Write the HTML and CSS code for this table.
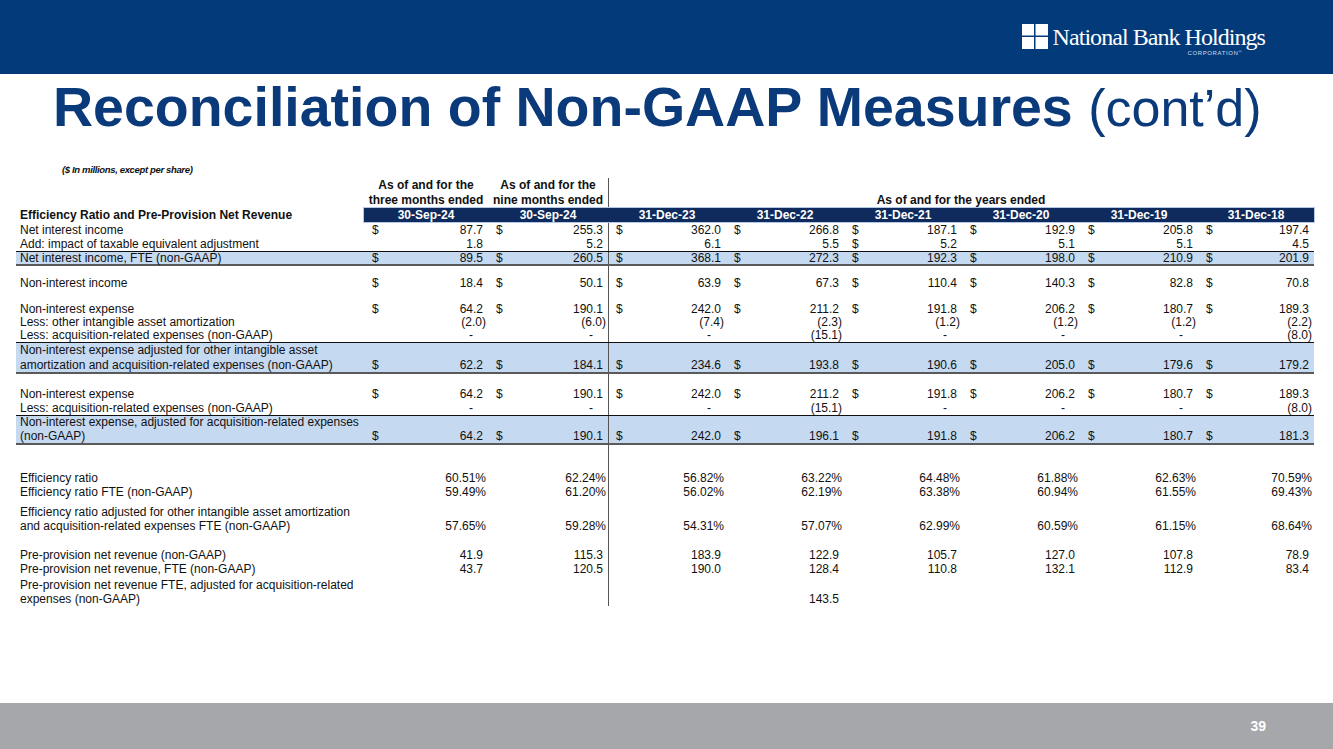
FILE: index.html
```html
<!DOCTYPE html>
<html lang="en">
<head>
<meta charset="utf-8">
<title>Reconciliation of Non-GAAP Measures (cont'd)</title>
<link rel="stylesheet" href="styles.css">
</head>
<body>
<header class="topbar">
  <div class="brand">
    <svg class="mark" width="26" height="25" viewBox="0 0 26 25" aria-hidden="true">
      <rect x="0" y="0" width="12" height="11.5" fill="#fff"/>
      <rect x="13.5" y="0" width="12.5" height="11.5" fill="#fff"/>
      <rect x="0" y="13" width="12" height="12" fill="#fff"/>
      <rect x="13.5" y="13" width="12.5" height="12" fill="#fff"/>
    </svg>
    <div class="brand-text">
      <div class="brand-name">National Bank Holdings</div>
      <div class="brand-corp">CORPORATION<sup>®</sup></div>
    </div>
  </div>
</header>

<h1 class="title">Reconciliation of Non-GAAP Measures <span class="cont">(cont’d)</span></h1>

<div class="note">($ In millions, except per share)</div>

<div class="tbl">
  <div class="row h1">
    <div></div>
    <div class="hc">As of and for the</div>
    <div class="hc">As of and for the</div>
  </div>
  <div class="row h2">
    <div></div>
    <div class="hc">three months ended</div>
    <div class="hc">nine months ended</div>
    <div class="hc span6">As of and for the years ended</div>
  </div>
  <div class="row band">
    <div class="lbl b">Efficiency Ratio and Pre-Provision Net Revenue</div>
    <div class="d first">30-Sep-24</div>
    <div class="d">30-Sep-24</div>
    <div class="d">31-Dec-23</div>
    <div class="d">31-Dec-22</div>
    <div class="d">31-Dec-21</div>
    <div class="d">31-Dec-20</div>
    <div class="d">31-Dec-19</div>
    <div class="d last">31-Dec-18</div>
  </div>

  <div class="row">
    <div class="lbl">Net interest income</div>
    <div class="c"><span>$</span><span class="v">87.7</span></div>
    <div class="c"><span>$</span><span class="v">255.3</span></div>
    <div class="c"><span>$</span><span class="v">362.0</span></div>
    <div class="c"><span>$</span><span class="v">266.8</span></div>
    <div class="c"><span>$</span><span class="v">187.1</span></div>
    <div class="c"><span>$</span><span class="v">192.9</span></div>
    <div class="c"><span>$</span><span class="v">205.8</span></div>
    <div class="c"><span>$</span><span class="v">197.4</span></div>
  </div>
  <div class="row">
    <div class="lbl">Add: impact of taxable equivalent adjustment</div>
    <div class="c"><span class="v">1.8</span></div>
    <div class="c"><span class="v">5.2</span></div>
    <div class="c"><span class="v">6.1</span></div>
    <div class="c"><span class="v">5.5</span></div>
    <div class="c"><span>$</span><span class="v">5.2</span></div>
    <div class="c"><span class="v">5.1</span></div>
    <div class="c"><span class="v">5.1</span></div>
    <div class="c"><span class="v">4.5</span></div>
  </div>
  <div class="row hl hl1">
    <div class="lbl">Net interest income, FTE (non-GAAP)</div>
    <div class="c"><span>$</span><span class="v">89.5</span></div>
    <div class="c"><span>$</span><span class="v">260.5</span></div>
    <div class="c"><span>$</span><span class="v">368.1</span></div>
    <div class="c"><span>$</span><span class="v">272.3</span></div>
    <div class="c"><span>$</span><span class="v">192.3</span></div>
    <div class="c"><span>$</span><span class="v">198.0</span></div>
    <div class="c"><span>$</span><span class="v">210.9</span></div>
    <div class="c"><span>$</span><span class="v">201.9</span></div>
  </div>
  <div class="sp s10"></div>
  <div class="row">
    <div class="lbl">Non-interest income</div>
    <div class="c"><span>$</span><span class="v">18.4</span></div>
    <div class="c"><span>$</span><span class="v">50.1</span></div>
    <div class="c"><span>$</span><span class="v">63.9</span></div>
    <div class="c"><span>$</span><span class="v">67.3</span></div>
    <div class="c"><span>$</span><span class="v">110.4</span></div>
    <div class="c"><span>$</span><span class="v">140.3</span></div>
    <div class="c"><span>$</span><span class="v">82.8</span></div>
    <div class="c"><span>$</span><span class="v">70.8</span></div>
  </div>
  <div class="sp s12"></div>
  <div class="row">
    <div class="lbl">Non-interest expense</div>
    <div class="c"><span>$</span><span class="v">64.2</span></div>
    <div class="c"><span>$</span><span class="v">190.1</span></div>
    <div class="c"><span>$</span><span class="v">242.0</span></div>
    <div class="c"><span>$</span><span class="v">211.2</span></div>
    <div class="c"><span>$</span><span class="v">191.8</span></div>
    <div class="c"><span>$</span><span class="v">206.2</span></div>
    <div class="c"><span>$</span><span class="v">180.7</span></div>
    <div class="c"><span>$</span><span class="v">189.3</span></div>
  </div>
  <div class="row r13">
    <div class="lbl">Less: other intangible asset amortization</div>
    <div class="c"><span class="v n">(2.0)</span></div>
    <div class="c"><span class="v n">(6.0)</span></div>
    <div class="c"><span class="v n">(7.4)</span></div>
    <div class="c"><span class="v n">(2.3)</span></div>
    <div class="c"><span class="v n">(1.2)</span></div>
    <div class="c"><span class="v n">(1.2)</span></div>
    <div class="c"><span class="v n">(1.2)</span></div>
    <div class="c"><span class="v n">(2.2)</span></div>
  </div>
  <div class="row r13">
    <div class="lbl">Less: acquisition-related expenses (non-GAAP)</div>
    <div class="c"><span class="v z">-</span></div>
    <div class="c"><span class="v z">-</span></div>
    <div class="c"><span class="v z">-</span></div>
    <div class="c"><span class="v n">(15.1)</span></div>
    <div class="c"><span class="v z">-</span></div>
    <div class="c"><span class="v z">-</span></div>
    <div class="c"><span class="v z">-</span></div>
    <div class="c"><span class="v n">(8.0)</span></div>
  </div>
  <div class="row hl hl2">
    <div class="lbl">Non-interest expense adjusted for other intangible asset<br>amortization and acquisition-related expenses (non-GAAP)</div>
    <div class="c"><span>$</span><span class="v">62.2</span></div>
    <div class="c"><span>$</span><span class="v">184.1</span></div>
    <div class="c"><span>$</span><span class="v">234.6</span></div>
    <div class="c"><span>$</span><span class="v">193.8</span></div>
    <div class="c"><span>$</span><span class="v">190.6</span></div>
    <div class="c"><span>$</span><span class="v">205.0</span></div>
    <div class="c"><span>$</span><span class="v">179.6</span></div>
    <div class="c"><span>$</span><span class="v">179.2</span></div>
  </div>
  <div class="sp s13"></div>
  <div class="row">
    <div class="lbl">Non-interest expense</div>
    <div class="c"><span>$</span><span class="v">64.2</span></div>
    <div class="c"><span>$</span><span class="v">190.1</span></div>
    <div class="c"><span>$</span><span class="v">242.0</span></div>
    <div class="c"><span>$</span><span class="v">211.2</span></div>
    <div class="c"><span>$</span><span class="v">191.8</span></div>
    <div class="c"><span>$</span><span class="v">206.2</span></div>
    <div class="c"><span>$</span><span class="v">180.7</span></div>
    <div class="c"><span>$</span><span class="v">189.3</span></div>
  </div>
  <div class="row">
    <div class="lbl">Less: acquisition-related expenses (non-GAAP)</div>
    <div class="c"><span class="v z">-</span></div>
    <div class="c"><span class="v z">-</span></div>
    <div class="c"><span class="v z">-</span></div>
    <div class="c"><span class="v n">(15.1)</span></div>
    <div class="c"><span class="v z">-</span></div>
    <div class="c"><span class="v z">-</span></div>
    <div class="c"><span class="v z">-</span></div>
    <div class="c"><span class="v n">(8.0)</span></div>
  </div>
  <div class="row hl hl3">
    <div class="lbl">Non-interest expense, adjusted for acquisition-related expenses<br>(non-GAAP)</div>
    <div class="c"><span>$</span><span class="v">64.2</span></div>
    <div class="c"><span>$</span><span class="v">190.1</span></div>
    <div class="c"><span>$</span><span class="v">242.0</span></div>
    <div class="c"><span>$</span><span class="v">196.1</span></div>
    <div class="c"><span>$</span><span class="v">191.8</span></div>
    <div class="c"><span>$</span><span class="v">206.2</span></div>
    <div class="c"><span>$</span><span class="v">180.7</span></div>
    <div class="c"><span>$</span><span class="v">181.3</span></div>
  </div>
  <div class="sp s26"></div>
  <div class="row">
    <div class="lbl">Efficiency ratio</div>
    <div class="c"><span class="v p">60.51%</span></div>
    <div class="c"><span class="v p">62.24%</span></div>
    <div class="c"><span class="v p">56.82%</span></div>
    <div class="c"><span class="v p">63.22%</span></div>
    <div class="c"><span class="v p">64.48%</span></div>
    <div class="c"><span class="v p">61.88%</span></div>
    <div class="c"><span class="v p">62.63%</span></div>
    <div class="c"><span class="v p">70.59%</span></div>
  </div>
  <div class="row">
    <div class="lbl">Efficiency ratio FTE (non-GAAP)</div>
    <div class="c"><span class="v p">59.49%</span></div>
    <div class="c"><span class="v p">61.20%</span></div>
    <div class="c"><span class="v p">56.02%</span></div>
    <div class="c"><span class="v p">62.19%</span></div>
    <div class="c"><span class="v p">63.38%</span></div>
    <div class="c"><span class="v p">60.94%</span></div>
    <div class="c"><span class="v p">61.55%</span></div>
    <div class="c"><span class="v p">69.43%</span></div>
  </div>
  <div class="sp s6"></div>
  <div class="row two">
    <div class="lbl">Efficiency ratio adjusted for other intangible asset amortization<br>and acquisition-related expenses FTE (non-GAAP)</div>
    <div class="c"><span class="v p">57.65%</span></div>
    <div class="c"><span class="v p">59.28%</span></div>
    <div class="c"><span class="v p">54.31%</span></div>
    <div class="c"><span class="v p">57.07%</span></div>
    <div class="c"><span class="v p">62.99%</span></div>
    <div class="c"><span class="v p">60.59%</span></div>
    <div class="c"><span class="v p">61.15%</span></div>
    <div class="c"><span class="v p">68.64%</span></div>
  </div>
  <div class="sp s15"></div>
  <div class="row">
    <div class="lbl">Pre-provision net revenue (non-GAAP)</div>
    <div class="c"><span class="v">41.9</span></div>
    <div class="c"><span class="v">115.3</span></div>
    <div class="c"><span class="v">183.9</span></div>
    <div class="c"><span class="v">122.9</span></div>
    <div class="c"><span class="v">105.7</span></div>
    <div class="c"><span class="v">127.0</span></div>
    <div class="c"><span class="v">107.8</span></div>
    <div class="c"><span class="v">78.9</span></div>
  </div>
  <div class="row">
    <div class="lbl">Pre-provision net revenue, FTE (non-GAAP)</div>
    <div class="c"><span class="v">43.7</span></div>
    <div class="c"><span class="v">120.5</span></div>
    <div class="c"><span class="v">190.0</span></div>
    <div class="c"><span class="v">128.4</span></div>
    <div class="c"><span class="v">110.8</span></div>
    <div class="c"><span class="v">132.1</span></div>
    <div class="c"><span class="v">112.9</span></div>
    <div class="c"><span class="v">83.4</span></div>
  </div>
  <div class="sp s2"></div>
  <div class="row two">
    <div class="lbl">Pre-provision net revenue FTE, adjusted for acquisition-related<br>expenses (non-GAAP)</div>
    <div class="c"></div>
    <div class="c"></div>
    <div class="c"></div>
    <div class="c"><span class="v">143.5</span></div>
    <div class="c"></div>
    <div class="c"></div>
    <div class="c"></div>
    <div class="c"></div>
  </div>
</div>

<footer class="footer">
  <span class="page">39</span>
</footer>
</body>
</html>
```

FILE: styles.css
```css
* { box-sizing: border-box; }

html, body {
  margin: 0;
  padding: 0;
}

body {
  width: 1333px;
  height: 749px;
  overflow: hidden;
  background: #ffffff;
  font-family: "Liberation Sans", Arial, sans-serif;
  color: #111;
  display: flex;
  flex-direction: column;
}

/* ---------- top bar ---------- */
.topbar {
  height: 74px;
  flex: 0 0 74px;
  background: #033b7a;
  display: flex;
  justify-content: flex-end;
  align-items: flex-start;
}

.brand {
  display: flex;
  align-items: flex-start;
  gap: 5px;
  margin-top: 24px;
  margin-right: 68px;
}

.mark { display: block; }

.brand-text {
  display: flex;
  flex-direction: column;
  align-items: flex-end;
}

.brand-name {
  font-family: "Liberation Serif", "Times New Roman", serif;
  font-size: 24px;
  line-height: 24px;
  letter-spacing: -0.95px;
  color: #ffffff;
  margin-top: 1px;
  white-space: nowrap;
}

.brand-corp {
  font-family: "Liberation Sans", Arial, sans-serif;
  font-size: 6px;
  line-height: 8px;
  letter-spacing: 0.6px;
  color: #d6dcea;
  margin-right: 23px;
}

.brand-corp sup {
  font-size: 4px;
  vertical-align: top;
  line-height: 6px;
}

/* ---------- title ---------- */
.title {
  margin: 6px 0 0 53px;
  height: 55px;
  flex: 0 0 55px;
  font-size: 55.5px;
  line-height: 55px;
  font-weight: bold;
  color: #0b3a7b;
  white-space: nowrap;
}

.title .cont {
  font-weight: normal;
  font-size: 52px;
  line-height: 1;
}

.note {
  margin: 29px 0 0 62px;
  font-size: 9.5px;
  line-height: 12px;
  font-weight: bold;
  font-style: italic;
  letter-spacing: -0.35px;
  color: #111;
}

/* ---------- table ---------- */
.tbl {
  --cols: 348px 124px 120px 118px 118px 118px 118px 118px 116px;
  margin: 2px 0 0 16px;
  width: 1298px;
  background: linear-gradient(#555, #555) no-repeat 592px 0 / 1px 100%;
  font-size: 12px;
}

.row {
  display: grid;
  grid-template-columns: var(--cols);
  height: 14px;
  line-height: 14px;
  white-space: nowrap;
}

.row.r13 { height: 13px; line-height: 13px; }

.lbl {
  padding-left: 4px;
}

.b { font-weight: bold; }

.hc {
  font-weight: bold;
  text-align: center;
}

.h1 { height: 15px; line-height: 15px; }

.span6 { grid-column: 4 / 10; }

.band {
  height: 16px;
  line-height: 16px;
}

.band .d {
  background: #0f2a5c;
  color: #ffffff;
  font-weight: bold;
  text-align: center;
  border-top: 1px solid #b3c8e6;
  border-bottom: 1px solid #b3c8e6;
  line-height: 14px;
}

.band .d.first { box-shadow: -1px 0 0 #b3c8e6; }
.band .d.last { box-shadow: 1px 0 0 #b3c8e6; }

.c {
  display: flex;
  align-items: flex-end;
  padding: 0 5px 0 8px;
}

.v { margin-left: auto; }
.v.n { margin-right: -3px; }
.v.p { margin-right: -3px; }
.v.z { margin-right: 10px; }

.hl {
  background: linear-gradient(#555, #555) no-repeat 592px 0 / 1px 100%, #c5d9f1;
  border-top: 1px solid #111;
  border-bottom: 2px solid #5a5a5a;
}

.hl1 { height: 15px; line-height: 12px; }
.hl2 { height: 32px; line-height: 14.5px; }
.hl3 { height: 30px; line-height: 13.5px; }
.two { height: 28px; line-height: 14px; }

.sp { height: 10px; }
.s2 { height: 2px; }
.s6 { height: 6px; }
.s10 { height: 10px; }
.s12 { height: 12px; }
.s13 { height: 13px; }
.s15 { height: 15px; }
.s26 { height: 26px; }

/* ---------- footer ---------- */
.footer {
  margin-top: auto;
  height: 46px;
  flex: 0 0 46px;
  background: #a6a7ab;
  display: flex;
  justify-content: flex-end;
  align-items: center;
  padding-right: 67px;
}

.page {
  color: #ffffff;
  font-weight: bold;
  font-size: 14px;
}
```
